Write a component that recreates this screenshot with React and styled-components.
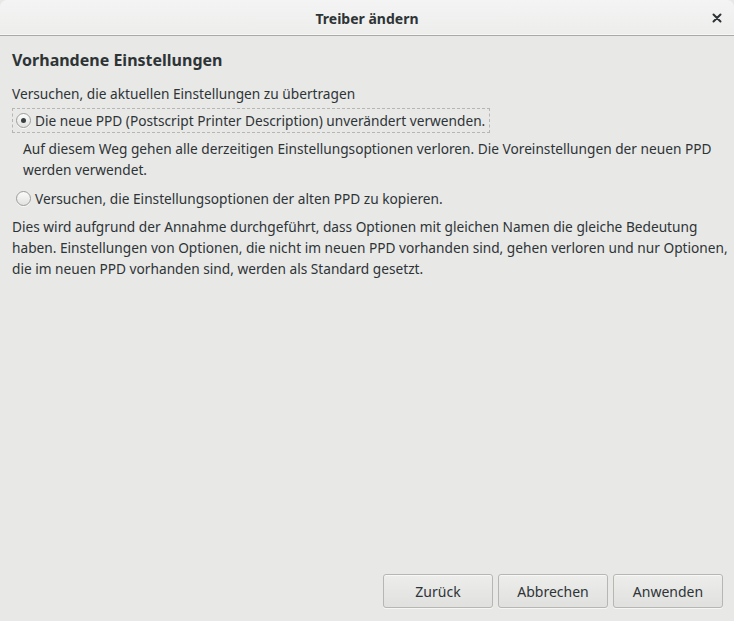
import React, { useState } from "react";
import styled, { createGlobalStyle } from "styled-components";

const Global = createGlobalStyle`
  html, body { margin: 0; padding: 0; }
  body {
    background: #e8e8e7;
    font-family: "Noto Sans", "Open Sans", sans-serif;
    color: #2e3436;
  }
`;

export default function App() {
  const [choice, setChoice] = useState("new");

  return (
    <Window>
      <Global />
      <TitleBar>
        <Title>Treiber ändern</Title>
        <CloseButton aria-label="Schließen">
          <svg width="10" height="10" viewBox="0 0 10 10">
            <path d="M1.5 1.5 L8.5 8.5 M8.5 1.5 L1.5 8.5" stroke="#2e3436" strokeWidth="2" strokeLinecap="round" />
          </svg>
        </CloseButton>
      </TitleBar>

      <Body>
        <Heading>Vorhandene Einstellungen</Heading>
        <Text>Versuchen, die aktuellen Einstellungen zu übertragen</Text>

        <Option focused={choice === "new"} onClick={() => setChoice("new")}>
          <Radio checked={choice === "new"} />
          <span>Die neue PPD (Postscript Printer Description) unverändert verwenden.</span>
        </Option>
        <Hint>
          Auf diesem Weg gehen alle derzeitigen Einstellungsoptionen verloren. Die Voreinstellungen der neuen PPD
          <br />
          werden verwendet.
        </Hint>

        <Option focused={choice === "old"} onClick={() => setChoice("old")}>
          <Radio checked={choice === "old"} />
          <span>Versuchen, die Einstellungsoptionen der alten PPD zu kopieren.</span>
        </Option>
        <Paragraph>
          Dies wird aufgrund der Annahme durchgeführt, dass Optionen mit gleichen Namen die gleiche Bedeutung
          <br />
          haben. Einstellungen von Optionen, die nicht im neuen PPD vorhanden sind, gehen verloren und nur Optionen,
          <br />
          die im neuen PPD vorhanden sind, werden als Standard gesetzt.
        </Paragraph>
      </Body>

      <Actions>
        <Button>Zurück</Button>
        <Button>Abbrechen</Button>
        <Button>Anwenden</Button>
      </Actions>
    </Window>
  );
}

const Window = styled.div`
  width: 734px;
  height: 621px;
  display: flex;
  flex-direction: column;
  background: #e8e8e7;
  overflow: hidden;
`;

const TitleBar = styled.div`
  height: 35px;
  flex-shrink: 0;
  display: flex;
  align-items: center;
  justify-content: center;
  background: linear-gradient(#f4f4f4, #ededec);
  border-bottom: 1px solid #a9a9a6;
  border-radius: 7px 7px 0 0;
  box-shadow: inset 0 -1px 0 #f7f7f7;
  position: relative;
`;

const Title = styled.div`
  font-size: 14px;
  font-weight: bold;
  color: #2e3436;
  margin-top: 1px;
`;

const CloseButton = styled.div`
  position: absolute;
  right: 12px;
  top: 13px;
  width: 10px;
  height: 10px;
  display: flex;
`;

const Body = styled.div`
  flex: 1;
  display: flex;
  flex-direction: column;
  align-items: flex-start;
  padding: 13px 6px 0 12px;
  font-size: 13.7px;
  white-space: nowrap;
`;

const Heading = styled.div`
  font-size: 16px;
  font-weight: bold;
  line-height: 22px;
  margin-bottom: 13px;
`;

const Text = styled.div`
  line-height: 20px;
  margin-bottom: 4px;
`;

const Option = styled.div`
  display: flex;
  align-items: center;
  gap: 4px;
  height: 23px;
  padding: 0 4px 0 3px;
  border: 1px dashed ${(p) => (p.focused ? "#b6b6b3" : "transparent")};
  cursor: default;
`;

const Radio = styled.span`
  width: 15px;
  min-width: 15px;
  height: 15px;
  border-radius: 50%;
  border: 1px solid #9d9d9a;
  background: linear-gradient(#fbfbfb, #e2e2e0);
  box-shadow: 0 1px 0 rgba(255, 255, 255, 0.7);
  box-sizing: border-box;
  display: flex;
  align-items: center;
  justify-content: center;
  &::after {
    content: "";
    width: 5px;
    height: 5px;
    border-radius: 50%;
    background: #3a3f41;
    display: ${(p) => (p.checked ? "block" : "none")};
  }
`;

const Hint = styled.div`
  line-height: 21px;
  padding-left: 11px;
  margin: 5px 0 6px 0;
`;

const Paragraph = styled.div`
  line-height: 21px;
  margin-top: 5px;
`;

const Actions = styled.div`
  display: flex;
  justify-content: flex-end;
  gap: 5px;
  padding: 0 11px 13px 0;
`;

const Button = styled.button`
  width: 110px;
  height: 34px;
  font-family: "Noto Sans", "Open Sans", sans-serif;
  font-size: 14px;
  color: #2e3436;
  background: linear-gradient(#ededec, #e0e0de);
  border: 1px solid #b6b6b3;
  border-radius: 3px;
  box-shadow: inset 0 1px 0 #f8f8f8, 0 1px 0 rgba(255, 255, 255, 0.6);
`;
